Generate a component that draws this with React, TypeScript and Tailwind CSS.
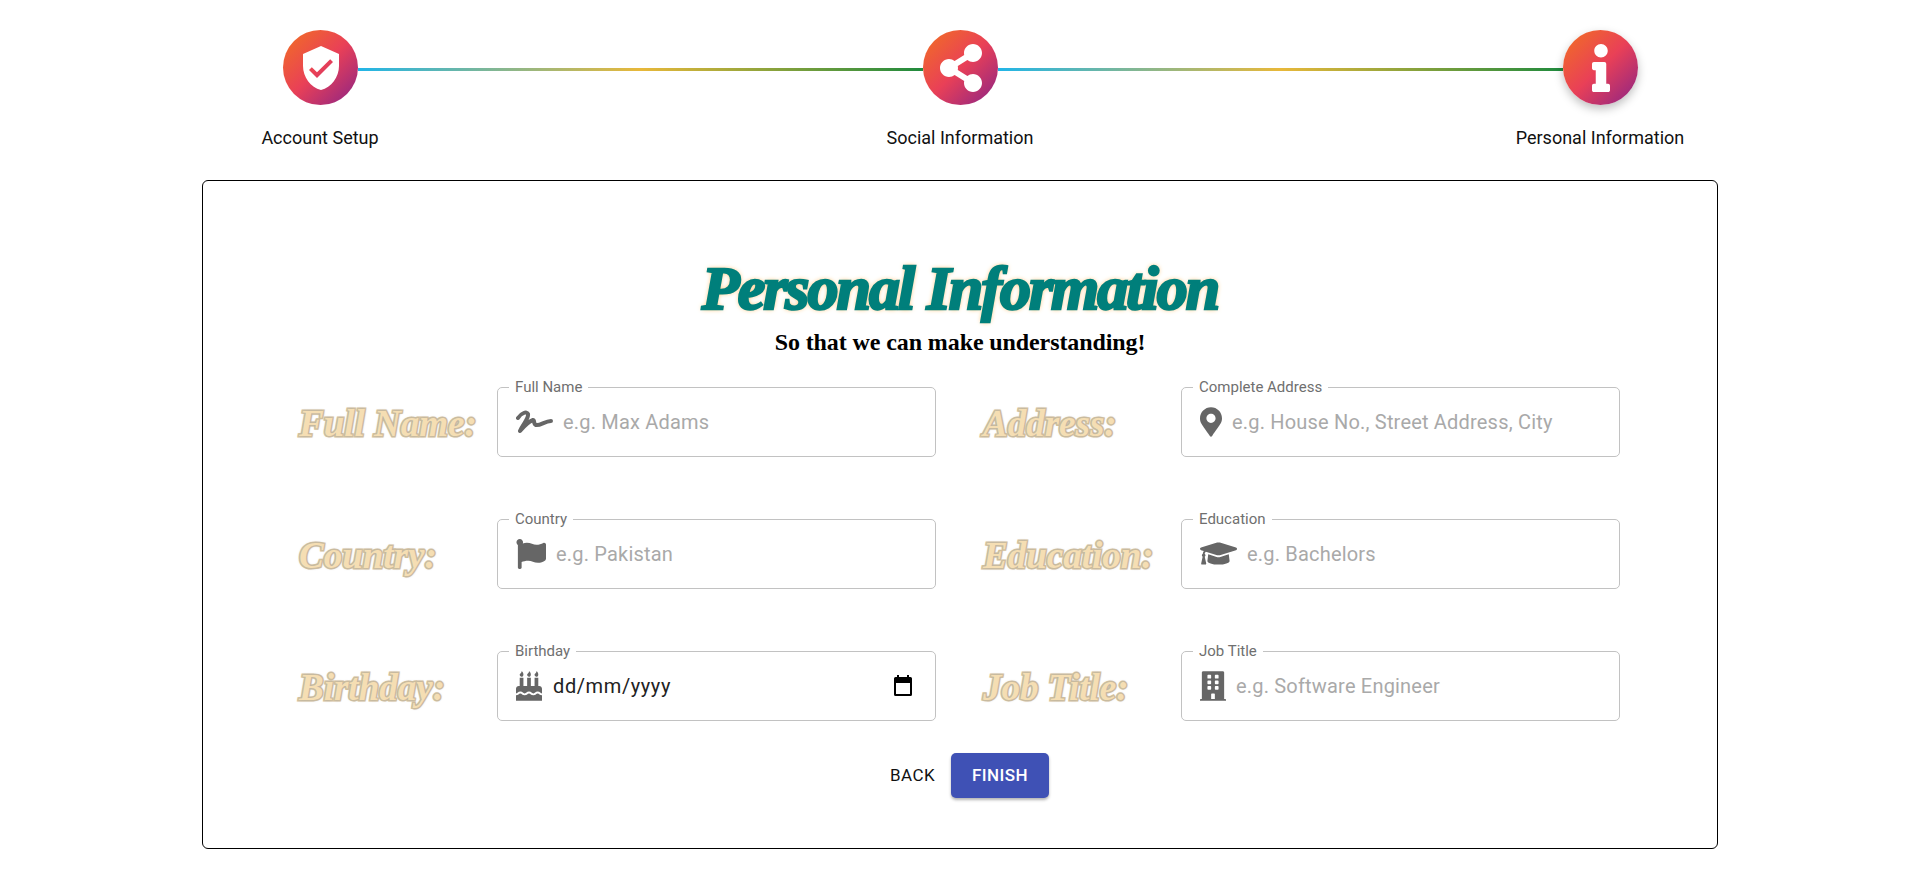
import React from "react";
import { FaBirthdayCake, FaBuilding, FaFlag, FaGraduationCap, FaInfo, FaMapMarkerAlt, FaShareAlt } from "react-icons/fa";
import { MdVerifiedUser } from "react-icons/md";

const Circle = ({ children, shadow }: { children: React.ReactNode; shadow?: boolean }) => (
  <div className={`flex h-[75px] w-[75px] shrink-0 items-center justify-center rounded-full bg-[linear-gradient(136deg,#f27121_0%,#e94057_50%,#8a2387_100%)] text-white ${shadow ? "shadow-[0_4px_10px_rgba(0,0,0,0.25)]" : ""}`}>
    {children}
  </div>
);

const Line = () => (
  <div className="mt-[38px] h-[3px] flex-1 bg-[linear-gradient(95deg,#21b5e8_0%,#e8b83a_50%,#1f8a3e_100%)]" />
);

const Signature = () => (
  <svg width="37" height="24" viewBox="0 0 37 24" fill="none" stroke="#666" strokeWidth="4" strokeLinecap="round" strokeLinejoin="round">
    <path d="M2 8C5 3 11 1 12 4C13 9 6 15 4 21C9 15 14 11 17 10C19 10 17 14 20 15C24 16 29 11 35 11" />
  </svg>
);

const Calendar = () => (
  <svg width="20" height="22" viewBox="0 0 20 22" className="shrink-0">
    <path d="M4 0h2v2h8V0h2v2h1.5A1.5 1.5 0 0 1 19 3.5v16a1.5 1.5 0 0 1-1.5 1.5h-15A1.5 1.5 0 0 1 1 19.5v-16A1.5 1.5 0 0 1 2.5 2H4V0zM3 8v11h14V8H3z" fill="#000" />
  </svg>
);

const Field = ({ script, label, icon, placeholder, date }: { script: string; label: string; icon: React.ReactNode; placeholder?: string; date?: boolean }) => (
  <div className="flex items-start">
    <div className="w-[198px] shrink-0 pt-[14px] font-['Liberation_Serif',serif] text-[37px] leading-[62px] font-bold text-[#f5deb3] italic [-webkit-text-stroke:3px_#d6c29b] [paint-order:stroke_fill] [text-shadow:0_0_3px_#aaa] whitespace-nowrap">
      {script}
    </div>
    <fieldset className="h-[78px] min-w-0 flex-1 rounded-[5px] border border-[#c2c2c2] pl-[11px] pr-[22px]">
      <legend className="px-[6px] text-[15px] leading-[16px] text-[#6f6f6f]">{label}</legend>
      <div className="flex h-[52px] items-center gap-[10px] pl-[7px] pt-[1px]">
        <span className="flex shrink-0 items-center text-[#666]">{icon}</span>
        {date ? (
          <>
            <input readOnly defaultValue="dd/mm/yyyy" className="ml-[1px] min-w-0 flex-1 text-[20px] tracking-[0.6px] text-[#222] outline-none" />
            <Calendar />
          </>
        ) : (
          <input readOnly placeholder={placeholder} className="min-w-0 flex-1 text-[20px] tracking-[0.19px] outline-none placeholder:text-[#a9a9a9]" />
        )}
      </div>
    </fieldset>
  </div>
);

export default function App() {
  return (
    <div className="min-h-[886px] bg-white pt-[30px] font-['Roboto',sans-serif]">
      <div className="flex pl-[283px] pr-[282px]">
        <Circle><MdVerifiedUser size={48} /></Circle>
        <Line />
        <Circle><FaShareAlt size={48} /></Circle>
        <Line />
        <Circle shadow><FaInfo size={48} /></Circle>
      </div>
      <div className="mt-[21px] grid grid-cols-3 text-center text-[18px] leading-[24px] text-[#111]">
        <div>Account Setup</div>
        <div>Social Information</div>
        <div>Personal Information</div>
      </div>
      <div className="mx-auto mt-[30px] h-[669px] w-[1516px] rounded-[6px] border border-black pt-[69px]">
        <h1 className="text-center font-['Liberation_Serif',serif] text-[62px] leading-[76px] font-bold tracking-[-2px] text-[#007f7b] italic [-webkit-text-stroke:2.5px_#007f7b] [text-shadow:0_0_5px_#ffae42]">
          Personal Information
        </h1>
        <p className="text-center font-['Liberation_Serif',serif] text-[24px] leading-[32px] font-bold tracking-[-0.1px] text-black">
          So that we can make understanding!
        </p>
        <div className="mx-auto mt-[21px] grid w-[1322px] grid-cols-[637px_637px] gap-x-[47px] gap-y-[54px]">
          <Field script="Full Name:" label="Full Name" icon={<Signature />} placeholder="e.g. Max Adams" />
          <Field script="Address:" label="Complete Address" icon={<FaMapMarkerAlt className="h-[30px] w-[22px]" />} placeholder="e.g. House No., Street Address, City" />
          <Field script="Country:" label="Country" icon={<FaFlag size={30} />} placeholder="e.g. Pakistan" />
          <Field script="Education:" label="Education" icon={<FaGraduationCap size={37} />} placeholder="e.g. Bachelors" />
          <Field script="Birthday:" label="Birthday" icon={<FaBirthdayCake className="h-[30px] w-[26px]" />} date />
          <Field script="Job Title:" label="Job Title" icon={<FaBuilding className="h-[30px] w-[26px]" />} placeholder="e.g. Software Engineer" />
        </div>
        <div className="mt-[32px] flex items-center justify-center gap-[16px]">
          <button className="pl-[19px] text-[17px] font-normal tracking-[0.4px] text-[#111]">BACK</button>
          <button className="h-[45px] w-[98px] rounded-[5px] bg-[#3f51b5] text-[17px] font-medium tracking-[0.4px] text-white shadow-[0_2px_3px_rgba(0,0,0,0.3)]">FINISH</button>
        </div>
      </div>
    </div>
  );
}
